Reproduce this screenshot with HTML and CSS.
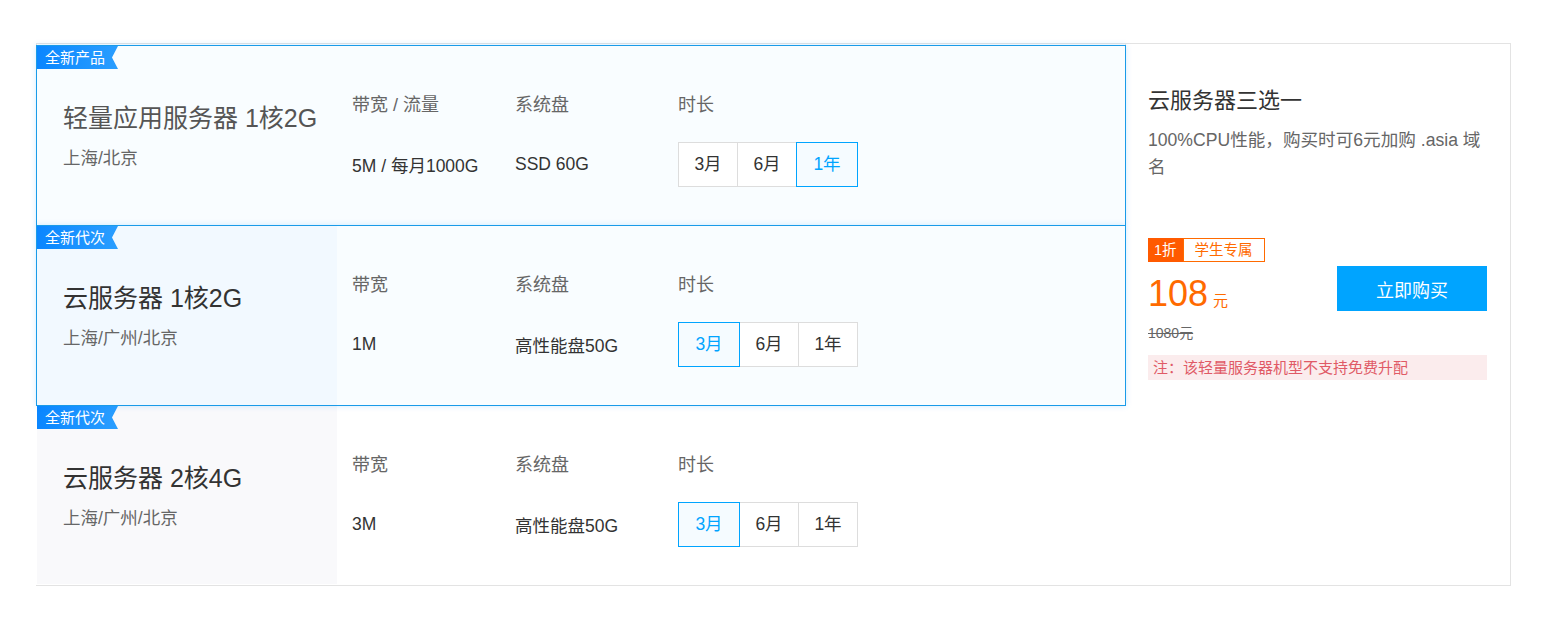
FILE: index.html
```html
<!DOCTYPE html>
<html lang="zh-CN">
<head>
    <meta charset="UTF-8">
    <meta name="viewport" content="width=device-width, initial-scale=1.0">
    <title>云服务器三选一</title>
    <link rel="stylesheet" href="styles.css">
</head>
<body>
<div class="page">
    <div class="box">
        <div class="plans">
            <!-- 轻量应用服务器 -->
            <div class="plan active">
                <span class="badge">全新产品</span>
                <div class="name grey-title">
                    <h3>轻量应用服务器 1核2G</h3>
                    <p>上海/北京</p>
                </div>
                <div class="spec">
                    <div class="label">带宽 / 流量</div>
                    <div class="value">5M / 每月1000G</div>
                </div>
                <div class="spec">
                    <div class="label">系统盘</div>
                    <div class="value">SSD 60G</div>
                </div>
                <div class="spec">
                    <div class="label">时长</div>
                    <div class="value">
                        <div class="durations">
                            <span>3月</span>
                            <span>6月</span>
                            <span class="on">1年</span>
                        </div>
                    </div>
                </div>
            </div>

            <!-- 云服务器 1核2G -->
            <div class="plan active tinted">
                <span class="badge">全新代次</span>
                <div class="name">
                    <h3>云服务器 1核2G</h3>
                    <p>上海/广州/北京</p>
                </div>
                <div class="spec">
                    <div class="label">带宽</div>
                    <div class="value">1M</div>
                </div>
                <div class="spec">
                    <div class="label">系统盘</div>
                    <div class="value">高性能盘50G</div>
                </div>
                <div class="spec">
                    <div class="label">时长</div>
                    <div class="value">
                        <div class="durations">
                            <span class="on">3月</span>
                            <span>6月</span>
                            <span>1年</span>
                        </div>
                    </div>
                </div>
            </div>

            <!-- 云服务器 2核4G -->
            <div class="plan">
                <span class="badge">全新代次</span>
                <div class="name">
                    <h3>云服务器 2核4G</h3>
                    <p>上海/广州/北京</p>
                </div>
                <div class="spec">
                    <div class="label">带宽</div>
                    <div class="value">3M</div>
                </div>
                <div class="spec">
                    <div class="label">系统盘</div>
                    <div class="value">高性能盘50G</div>
                </div>
                <div class="spec">
                    <div class="label">时长</div>
                    <div class="value">
                        <div class="durations">
                            <span class="on">3月</span>
                            <span>6月</span>
                            <span>1年</span>
                        </div>
                    </div>
                </div>
            </div>
        </div>

        <div class="deal">
            <h2>云服务器三选一</h2>
            <p class="desc">100%CPU性能，购买时可6元加购 .asia 域名</p>
            <div class="tags">
                <span class="off">1折</span>
                <span class="student">学生专属</span>
            </div>
            <div class="buy-row">
                <div class="prices">
                    <div class="price">108<small>元</small></div>
                    <div class="orig">1080元</div>
                </div>
                <button type="button">立即购买</button>
            </div>
            <div class="note">注：该轻量服务器机型不支持免费升配</div>
        </div>
    </div>
</div>
</body>
</html>
```

FILE: styles.css
```css
body {
    margin: 0;
    padding: 0;
    background-color: #fff;
    font-family: "Liberation Sans", "Noto Sans CJK SC", sans-serif;
    color: #333;
}

.page {
    padding: 43px 0 0 36px;
}

.box {
    display: flex;
    width: 1473px;
    border: 1px solid #e3e3e3;
}

/* plan list */
.plans {
    width: 1088px;
}

.plan {
    position: relative;
    display: flex;
    box-sizing: border-box;
    width: 1090px;
    height: 181px;
    margin: -1px 0 0 -1px;
    border: 1px solid transparent;
    background: #fff;
}

.plan:first-child {
    margin-top: 1px;
}

.plan:last-child {
    height: 180px;
}

.plan.active {
    border-color: #1a9be8;
    background: #f9fdff;
    box-shadow: 0 0 6px rgba(0, 140, 255, 0.18);
    z-index: 1;
}

.badge {
    position: absolute;
    top: 0;
    left: 0;
    width: 81px;
    height: 23px;
    padding-left: 8px;
    box-sizing: border-box;
    background: linear-gradient(90deg, #0a86ff, #2a9eff);
    color: #fff;
    font-size: 15px;
    line-height: 23px;
    clip-path: polygon(0 0, 100% 0, calc(100% - 6px) 50%, 100% 100%, 0 100%);
}

.name {
    width: 300px;
    flex-shrink: 0;
    box-sizing: border-box;
    padding: 55px 0 0 26px;
    background: #f9f9fb;
}

.plan.active .name {
    background: #f9fdff;
}

.plan.tinted .name {
    background: #f2f9ff;
}

.name h3 {
    margin: 0;
    font-size: 25px;
    font-weight: normal;
    line-height: 34px;
    color: #333;
}

.grey-title h3 {
    color: #555;
}

.name p {
    margin: 11px 0 0;
    font-size: 17.5px;
    line-height: 24px;
    color: #666;
}

.spec {
    width: 163px;
    padding-top: 47px;
    box-sizing: border-box;
}

.spec:nth-child(3) {
    margin-left: 15px;
}

.label {
    height: 24px;
    margin-bottom: 26px;
    font-size: 18px;
    line-height: 24px;
    color: #666;
}

.value {
    display: flex;
    align-items: center;
    height: 43px;
    font-size: 17.5px;
    color: #333;
}

.durations {
    display: flex;
}

.durations span {
    width: 60px;
    height: 45px;
    box-sizing: border-box;
    margin-left: -1px;
    border: 1px solid #ddd;
    background: #fff;
    text-align: center;
    line-height: 43px;
    font-size: 17.5px;
    color: #333;
}

.durations span:first-child {
    margin-left: 0;
}

.durations span.on {
    position: relative;
    width: 62px;
    border-color: #00a4ff;
    background: #f5fbff;
    color: #00a4ff;
}

/* right panel */
.deal {
    width: 385px;
    box-sizing: border-box;
    padding: 42px 23px 0 22px;
    border-left: 1px solid #e3e3e3;
}

.deal h2 {
    margin: 0;
    font-size: 22px;
    font-weight: normal;
    line-height: 30px;
    color: #333;
}

.desc {
    margin: 11px 0 0;
    font-size: 17.6px;
    line-height: 27px;
    color: #666;
}

.tags {
    display: flex;
    margin-top: 57px;
    font-size: 14.5px;
    line-height: 22px;
}

.off {
    padding: 0 5px;
    border: 1px solid #ff5a00;
    background: #ff5a00;
    color: #fff;
}

.student {
    padding: 0 11px;
    border: 1px solid #ff6a00;
    color: #ff6a00;
}

.buy-row {
    display: flex;
    justify-content: space-between;
    align-items: flex-start;
    margin-top: 4px;
}

.prices {
    padding-top: 8px;
}

.price {
    font-size: 36px;
    line-height: 40px;
    color: #ff6a00;
}

.price small {
    margin-left: 5px;
    font-size: 15px;
}

.orig {
    margin-top: 2px;
    font-size: 14px;
    line-height: 20px;
    color: #666;
    text-decoration: line-through;
}

button {
    width: 150px;
    height: 45px;
    border: none;
    background-color: #00a4ff;
    color: #fff;
    font-family: inherit;
    font-size: 18px;
    cursor: pointer;
}

.note {
    margin-top: 12px;
    padding-left: 5px;
    height: 25px;
    line-height: 25px;
    background: #fbeced;
    color: #e05a66;
    font-size: 15px;
}
```
